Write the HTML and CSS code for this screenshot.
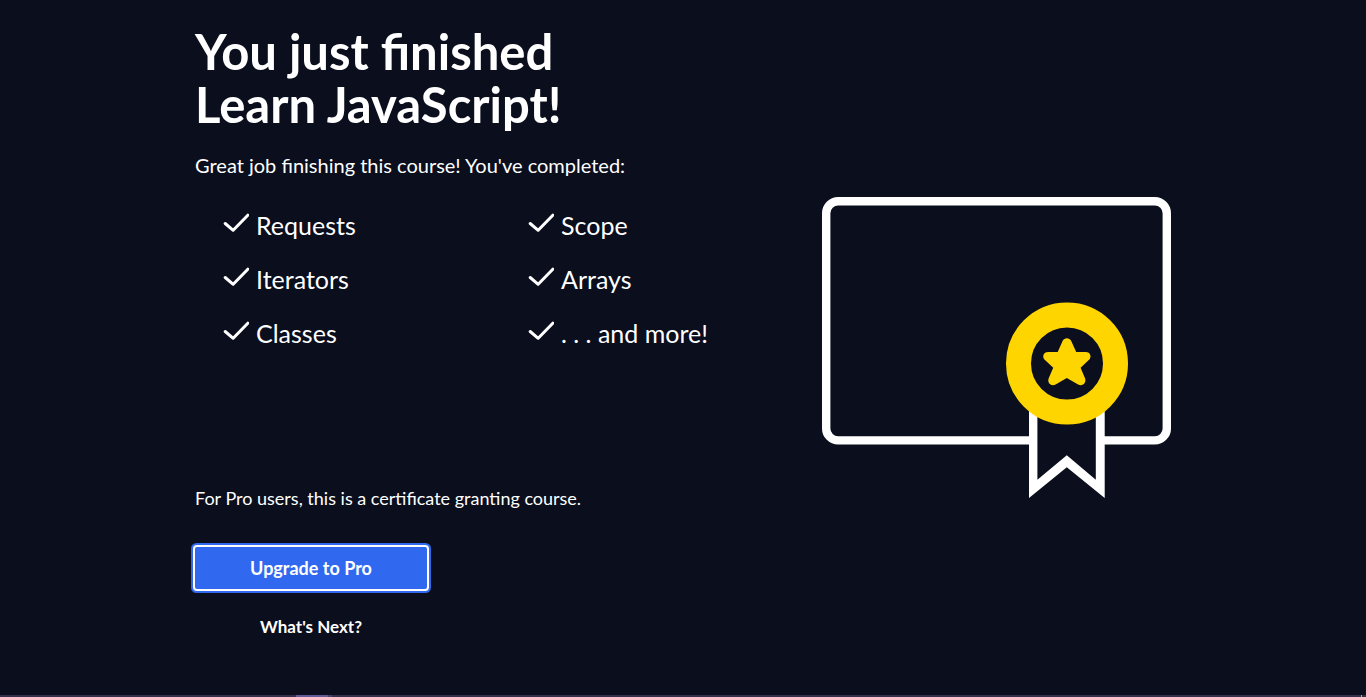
FILE: index.html
```html
<!DOCTYPE html>
<html lang="en">
<head>
<meta charset="utf-8">
<meta name="viewport" content="width=device-width, initial-scale=1">
<title>Course complete</title>
<link rel="stylesheet" href="styles.css">
</head>
<body>
<svg class="defs" aria-hidden="true">
  <symbol id="check" viewBox="0 0 26 20"><path d="M2.2 10.5 10.2 17.3 24.8 2.2" fill="none" stroke="currentColor" stroke-width="3" stroke-linecap="round" stroke-linejoin="round"/></symbol>
</svg>
<main class="page">
  <section class="summary">
    <h1 class="title">You just finished<br>Learn JavaScript!</h1>
    <p class="intro">Great job finishing this course! You've completed:</p>
    <ul class="topics">
      <li class="topic"><svg class="check" aria-hidden="true"><use href="#check"/></svg>Requests</li>
      <li class="topic"><svg class="check" aria-hidden="true"><use href="#check"/></svg>Scope</li>
      <li class="topic"><svg class="check" aria-hidden="true"><use href="#check"/></svg>Iterators</li>
      <li class="topic"><svg class="check" aria-hidden="true"><use href="#check"/></svg>Arrays</li>
      <li class="topic"><svg class="check" aria-hidden="true"><use href="#check"/></svg>Classes</li>
      <li class="topic"><svg class="check" aria-hidden="true"><use href="#check"/></svg>. . . and more!</li>
    </ul>
    <p class="note">For Pro users, this is a certificate granting course.</p>
    <div class="actions">
      <button class="button button-primary" type="button">Upgrade to Pro</button>
      <button class="button button-text" type="button">What's Next?</button>
    </div>
  </section>
  <svg class="certificate" viewBox="0 0 349 301" role="img" aria-label="Certificate">
    <rect x="4.2" y="4.2" width="340.6" height="239.2" rx="12" fill="none" stroke="#fff" stroke-width="8.4"/>
    <path d="M207 200V301L244.8 270.3 282.7 301V200Z" fill="#fff"/>
    <path d="M215.4 200V282.7L244.8 258.3 273.8 282.7V200Z" fill="#0a0e1d"/>
    <circle cx="245" cy="166.5" r="48.5" fill="#0a0e1d" stroke="#ffd500" stroke-width="25"/>
    <path d="M240.7 143.8C242.1 140.3 247.7 140.3 249.1 143.8L254.2 155H263.6C268.7 155 270 160.3 266.8 163L258.6 170.8 263 181.3C264.8 186 260.4 190 256.1 187.4L244.8 181 233.6 187.4C229.3 190 224.9 186 226.7 181.3L231.2 170.8 223 163C219.8 160.3 221.1 155 226.2 155H235.7Z" fill="#ffd500"/>
  </svg>
</main>
<footer class="strip"><span class="strip-active"></span><span class="strip-next"></span><span class="strip-end"></span></footer>
</body>
</html>
```
FILE: styles.css
```css
* { box-sizing: border-box; }

body {
  display: flex;
  flex-direction: column;
  min-height: 100vh;
  margin: 0;
  background: #0a0e1d;
  color: #fff;
  font-family: Lato, "Open Sans", sans-serif;
}

.defs { display: none; }

.page {
  display: flex;
  flex: 1;
  justify-content: space-between;
  align-items: flex-start;
  width: 100%;
  max-width: 1008px;
  margin: 0 auto;
  padding: 25px 16px;
}

.summary { flex: 0 1 610px; }

.title {
  margin: 0;
  font-size: 49px;
  line-height: 53px;
  font-weight: 700;
}

.intro {
  margin: 22px 0 0;
  font-size: 20px;
  line-height: 24px;
}

.topics {
  display: grid;
  grid-template-columns: 1fr 1fr;
  row-gap: 22px;
  min-height: 256px;
  align-content: start;
  margin: 32px 0 0;
  padding: 0;
  list-style: none;
}

.topic {
  display: flex;
  gap: 7px;
  padding-left: 28px;
  font-size: 25px;
  line-height: 32px;
}

.check {
  flex: none;
  width: 26px;
  height: 20px;
  margin-top: 4px;
}

.note {
  margin: 21px 0 0;
  font-size: 18px;
  line-height: 24px;
}

.actions {
  display: flex;
  flex-direction: column;
  align-items: center;
  gap: 17px;
  width: 232px;
  margin-top: 37px;
}

.button {
  padding: 0 16px;
  border: 0;
  background: none;
  color: inherit;
  font: 700 17px/42px Lato, "Open Sans", sans-serif;
  cursor: pointer;
}

.button-primary {
  width: 100%;
  border-radius: 2px;
  background: #3069f0;
  box-shadow: 0 0 0 2px #fff, 0 0 0 4px #3069f0;
  font-size: 18px;
}

.certificate {
  flex: 0 1 349px;
  min-width: 0;
  margin-top: 172px;
}

.strip {
  display: flex;
  height: 2px;
  padding: 0 4px 0 296px;
  background: #34304a;
}

.strip-active { width: 32px; background: #645c98; }
.strip-next { width: 4px; background: #49446a; }
.strip-end { width: 1px; margin-left: auto; background: #a7a1b8; }
```
